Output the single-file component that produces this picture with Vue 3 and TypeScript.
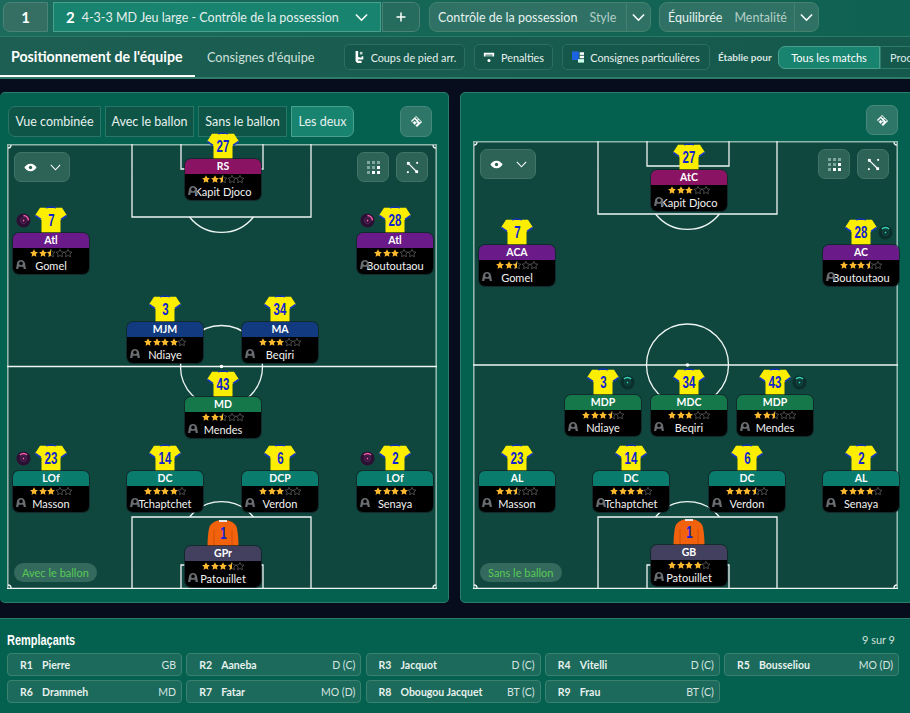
<script setup lang="ts">
interface Player {
  no: number
  pos: string
  name: string
  rating: number
  x: number
  y: number
  tone: string
  mark?: 'left' | 'right'
  gk?: boolean
}

interface Panel {
  id: string
  w: number
  h: number
  badge: string
  tabs: boolean
  players: Player[]
}

const panels: Panel[] = [
  {
    id: 'with',
    w: 430,
    h: 445,
    badge: 'Avec le ballon',
    tabs: true,
    players: [
      { no: 27, pos: 'RS', name: 'Kapit Djoco', rating: 2.5, x: 178, y: 15, tone: 'magenta' },
      { no: 7, pos: 'Atl', name: 'Gomel', rating: 2.5, x: 6, y: 89, tone: 'purple', mark: 'left' },
      { no: 28, pos: 'Atl', name: 'Boutoutaou', rating: 3, x: 350, y: 89, tone: 'purple', mark: 'left' },
      { no: 3, pos: 'MJM', name: 'Ndiaye', rating: 4, x: 120, y: 178, tone: 'navy' },
      { no: 34, pos: 'MA', name: 'Beqiri', rating: 3, x: 235, y: 178, tone: 'navy' },
      { no: 43, pos: 'MD', name: 'Mendes', rating: 2.5, x: 178, y: 253, tone: 'green' },
      { no: 23, pos: 'LOf', name: 'Masson', rating: 3, x: 6, y: 327, tone: 'teal', mark: 'left' },
      { no: 14, pos: 'DC', name: 'Tchaptchet', rating: 4, x: 120, y: 327, tone: 'teal' },
      { no: 6, pos: 'DCP', name: 'Verdon', rating: 3, x: 235, y: 327, tone: 'teal' },
      { no: 2, pos: 'LOf', name: 'Senaya', rating: 4, x: 350, y: 327, tone: 'teal', mark: 'left' },
      { no: 1, pos: 'GPr', name: 'Patouillet', rating: 3.5, x: 178, y: 402, tone: 'slate', gk: true }
    ]
  },
  {
    id: 'without',
    w: 425,
    h: 448,
    badge: 'Sans le ballon',
    tabs: false,
    players: [
      { no: 27, pos: 'AtC', name: 'Kapit Djoco', rating: 3, x: 178, y: 29, tone: 'magenta' },
      { no: 7, pos: 'ACA', name: 'Gomel', rating: 2.5, x: 6, y: 104, tone: 'purple' },
      { no: 28, pos: 'AC', name: 'Boutoutaou', rating: 3.5, x: 350, y: 104, tone: 'purple', mark: 'right' },
      { no: 3, pos: 'MDP', name: 'Ndiaye', rating: 3.5, x: 92, y: 254, tone: 'green', mark: 'right' },
      { no: 34, pos: 'MDC', name: 'Beqiri', rating: 3, x: 178, y: 254, tone: 'green' },
      { no: 43, pos: 'MDP', name: 'Mendes', rating: 2.5, x: 264, y: 254, tone: 'green', mark: 'right' },
      { no: 23, pos: 'AL', name: 'Masson', rating: 2.5, x: 6, y: 330, tone: 'teal' },
      { no: 14, pos: 'DC', name: 'Tchaptchet', rating: 4, x: 120, y: 330, tone: 'teal' },
      { no: 6, pos: 'DC', name: 'Verdon', rating: 3.5, x: 236, y: 330, tone: 'teal' },
      { no: 2, pos: 'AL', name: 'Senaya', rating: 4, x: 350, y: 330, tone: 'teal' },
      { no: 1, pos: 'GB', name: 'Patouillet', rating: 4, x: 178, y: 404, tone: 'slate', gk: true }
    ]
  }
]

const subs = [
  ['R1', 'Pierre', 'GB'],
  ['R2', 'Aaneba', 'D (C)'],
  ['R3', 'Jacquot', 'D (C)'],
  ['R4', 'Vitelli', 'D (C)'],
  ['R5', 'Bousseliou', 'MO (D)'],
  ['R6', 'Drammeh', 'MD'],
  ['R7', 'Fatar', 'MO (D)'],
  ['R8', 'Obougou Jacquet', 'BT (C)'],
  ['R9', 'Frau', 'BT (C)']
]

const views = ['Vue combinée', 'Avec le ballon', 'Sans le ballon', 'Les deux']

const starState = (rating: number, i: number) => {
  if (rating >= i) return 'full'
  if (rating >= i - 0.5) return 'half'
  return 'empty'
}

const STAR = '5,.4 6.5,3.5 9.9,4 7.4,6.3 8,9.7 5,8.1 2,9.7 2.6,6.3 .1,4 3.5,3.5'
const HALF = '5,.4 3.5,3.5 .1,4 2.6,6.3 2,9.7 5,8.1'
</script>

<template>
  <div class="screen">
    <header class="topbar">
      <button class="slot">1</button>
      <div class="tactic">
        <b>2</b>
        <span class="tactic-name">4-3-3 MD Jeu large - Contrôle de la possession</span>
        <svg class="chev" viewBox="0 0 14 9"><path d="M1 1.2 7 7.4 13 1.2" /></svg>
      </div>
      <button class="plus">
        <svg viewBox="0 0 10 10"><path d="M5 .5v9M.5 5h9" /></svg>
      </button>
      <div class="drop style-drop">
        <span class="value">Contrôle de la possession</span>
        <span class="caption">Style</span>
        <i class="drop-end"><svg class="chev" viewBox="0 0 14 9"><path d="M1 1.2 7 7.4 13 1.2" /></svg></i>
      </div>
      <div class="drop mind-drop">
        <span class="value">Équilibrée</span>
        <span class="caption">Mentalité</span>
        <i class="drop-end"><svg class="chev" viewBox="0 0 14 9"><path d="M1 1.2 7 7.4 13 1.2" /></svg></i>
      </div>
    </header>

    <nav class="tabsbar">
      <a class="tab active">Positionnement de l'équipe</a>
      <a class="tab second">Consignes d'équipe</a>
      <button class="tool setpiece">
        <svg viewBox="0 0 12 14"><path d="M2 0h3v7l4 1v-2h2v4H5v1.500h4V14H4L2 12z" fill="#fff" /><path d="M7 1h3v3H7z" fill="#fff" opacity=".75" /></svg>
        Coups de pied arr.
      </button>
      <button class="tool penalty">
        <svg viewBox="0 0 14 12"><path d="M1 1h12v4.500h-2V3H3v2.500H1z" fill="#fff" /><rect x="3" y="3" width="8" height="2.500" fill="#fff" opacity=".45" /><circle cx="7" cy="10" r="1.800" fill="#fff" /></svg>
        Penalties
      </button>
      <button class="tool special">
        <svg viewBox="0 0 14 13"><rect x="0" y="0" width="8" height="10" fill="#1c63e0" /><rect x="9" y="1" width="5" height="3" fill="#fff" /><rect x="9" y="5" width="5" height="3" fill="#fff" /><rect x="7" y="9" width="7" height="4" fill="#cfe" /></svg>
        Consignes particulières
      </button>
      <span class="for-label">Établie pour</span>
      <div class="segment">
        <span class="seg on">Tous les matchs</span>
        <span class="seg">Prochain match</span>
      </div>
    </nav>

    <main class="boards">
      <section v-for="panel in panels" :key="panel.id" class="panel" :class="panel.id">
        <div class="panel-tools">
          <template v-if="panel.tabs">
            <button v-for="v in views" :key="v" class="view" :class="{ on: v === 'Les deux' }">{{ v }}</button>
          </template>
          <button class="square flip">
            <svg viewBox="0 0 14 14"><path d="M6.500 1 13 7.500 7.500 13 1 6.500z" fill="#fff" /><path d="M2.500 8 5 5.500 6.800 7.300M5.500 10.800 8 8.300M6 2.500 8.200 4.700M9 5.500l2.200 2.200" stroke="#2e7668" stroke-width="1.200" fill="none" /></svg>
          </button>
        </div>

        <div class="pitch" :style="{ width: panel.w + 'px', height: panel.h + 'px' }">
          <svg class="lines" :width="panel.w" :height="panel.h" :viewBox="`0 0 ${panel.w} ${panel.h}`" fill="none">
            <path :d="`M.8 ${panel.h}V.8H${panel.w - 0.8}V${panel.h}`" stroke="#8fb5ac" stroke-width="1.600" />
            <g stroke="#eef5f3" stroke-width="1.300">
              <path d="M125 0V73H304V0M174 0V25H256V0" />
              <path d="M182.500 73A41 41 0 0 0 246.500 73" />
              <path :d="`M0 ${panel.h / 2}H${panel.w}`" />
              <circle cx="214.500" :cy="panel.h / 2" r="41" />
              <path :d="`M125 ${panel.h}V${panel.h - 72}H304V${panel.h}M174 ${panel.h}V${panel.h - 24}H256V${panel.h}`" />
              <path :d="`M182.500 ${panel.h - 72}A41 41 0 0 1 246.500 ${panel.h - 72}`" />
              <path :d="`M0 ${panel.h - 0.6}H${panel.w}`" />
              <path :d="`M1 4A3 3 0 0 0 4 1M${panel.w - 4} 1A3 3 0 0 0 ${panel.w - 1} 4M1 ${panel.h - 4}A3 3 0 0 1 4 ${panel.h - 1}M${panel.w - 4} ${panel.h - 1}A3 3 0 0 1 ${panel.w - 1} ${panel.h - 4}`" />
            </g>
            <circle cx="214.500" :cy="panel.h / 2" r="1.800" fill="#fff" />
          </svg>

          <button class="eye-btn">
            <svg class="eye" viewBox="0 0 14 9"><path d="M7 .5C3.800.5 1.500 2.600.5 4.500 1.500 6.400 3.800 8.500 7 8.500s5.500-2.100 6.500-4C12.500 2.600 10.200.5 7 .5z" fill="#fff" /><circle cx="7" cy="4.500" r="1.800" fill="#2d6357" /></svg>
            <svg class="chev small" viewBox="0 0 14 9"><path d="M1 1.200 7 7.400 13 1.200" /></svg>
          </button>
          <div class="pitch-tools">
            <button class="square">
              <svg viewBox="0 0 13 13"><g fill="#7fa79d"><rect x="0" y="0" width="3" height="3" /><rect x="5" y="0" width="3" height="3" /><rect x="10" y="0" width="3" height="3" /><rect x="0" y="5" width="3" height="3" /><rect x="5" y="5" width="3" height="3" /><rect x="0" y="10" width="3" height="3" /></g><g fill="#fff"><rect x="10" y="5" width="3" height="3" /><rect x="5" y="10" width="3" height="3" /><rect x="10" y="10" width="3" height="3" /></g></svg>
            </button>
            <button class="square">
              <svg viewBox="0 0 14 14"><path d="M2.500 2.500 11 11" stroke="#fff" stroke-width="1.300" /><g fill="#fff"><rect x="1" y="1" width="3" height="3" /><rect x="10" y="10" width="3" height="3" /><rect x="11" y="1" width="2" height="2" /><rect x="1" y="11" width="2" height="2" /></g></svg>
            </button>
          </div>
          <span class="phase">{{ panel.badge }}</span>

          <div
            v-for="p in panel.players"
            :key="p.pos + p.no"
            class="player"
            :style="{ left: p.x + 'px', top: p.y - 26 + 'px' }"
          >
            <div class="shirt">
              <svg v-if="p.gk" viewBox="0 0 32 27">
                <path d="M11 .5h10c5 1.500 8 3.500 9 8 1 5 1.500 12 1.500 18.500H.5C.5 20.500 1 13.500 2 8.500 3 4 6 2 11 .5z" fill="#f2610c" />
                <path d="M12 0h8v2h-8z" fill="#e6e6e6" />
                <path d="M7 10v17M25 10v17" stroke="#c94d05" stroke-width=".8" />
              </svg>
              <svg v-else viewBox="0 0 32 27">
                <path d="M5 .8H27L32 8.500 25.500 13V27H6.500V13L0 8.500z" fill="#fbee00" />
                <path d="M11 1C13 -.2 19 -.2 21 1" stroke="#1437c4" stroke-width="1.300" />
                <path d="M.3 8.500 6 12.300M31.700 8.500 26 12.300" stroke="#1437c4" stroke-width="1.600" />
              </svg>
              <span class="number"><span>{{ p.no }}</span></span>
            </div>
            <span v-if="p.mark" class="mood" :class="[p.mark, { turned: p.pos === 'Atl' }]">
              <svg viewBox="0 0 16 16">
                <circle cx="8" cy="8" r="7.500" />
                <circle class="ring" cx="8" cy="8" r="3.200" />
                <circle class="core" cx="8" cy="8" r="1" />
                <path class="arc" d="M4.200 4.300A5.300 5.300 0 0 1 11.800 4.300" />
              </svg>
            </span>
            <div class="card">
              <div class="role" :class="p.tone">{{ p.pos }}</div>
              <div class="info">
                <div class="stars">
                  <svg v-for="i in 5" :key="i" viewBox="0 0 10 10">
                    <polygon v-if="starState(p.rating, i) === 'full'" :points="STAR" fill="#fdb92e" />
                    <template v-else>
                      <polygon :points="STAR" fill="none" stroke="#6e6e6e" stroke-width=".8" />
                      <polygon v-if="starState(p.rating, i) === 'half'" :points="HALF" fill="#fdb92e" />
                    </template>
                  </svg>
                </div>
                <div class="who">
                  <svg class="avatar" viewBox="0 0 11 10"><path d="M5.500 0C3 0 1.500 1.600 1 4L0 10h2.500L3 7.500h5L8.500 10H11L10 4C9.500 1.600 8 0 5.500 0z" fill="#6a6e72" /><circle cx="5.500" cy="3.800" r="2" fill="#000" /></svg>
                  <span class="name">{{ p.name }}</span>
                </div>
              </div>
            </div>
          </div>
        </div>
      </section>
    </main>

    <footer class="subs">
      <div class="subs-head">
        <h2>Remplaçants</h2>
        <span>9 sur 9</span>
      </div>
      <div class="subs-grid">
        <div v-for="s in subs" :key="s[0]" class="sub">
          <span class="sub-no">{{ s[0] }}</span>
          <span class="sub-name">{{ s[1] }}</span>
          <span class="sub-pos">{{ s[2] }}</span>
        </div>
      </div>
    </footer>
  </div>
</template>

<style scoped>
.screen {
  width: 910px;
  height: 713px;
  overflow: hidden;
  display: flex;
  flex-direction: column;
  background: #070d1d;
  color: #fff;
  font-family: Lato, "Open Sans", sans-serif;
}

button {
  font: inherit;
  color: inherit;
  padding: 0;
  background: none;
  border: 0;
}

svg {
  display: block;
  overflow: visible;
}

.chev {
  width: 13px;
  height: 9px;
  fill: none;
  stroke: #fff;
  stroke-width: 1.7;
}

.chev.small {
  width: 11px;
  height: 7px;
  stroke-width: 1.4;
}

/* top row */
.topbar {
  height: 37px;
  flex: none;
  display: flex;
  align-items: flex-start;
  padding: 2px 0 0 3px;
  box-sizing: border-box;
  background: linear-gradient(90deg, #1c6b5c, #0f6151);
  border-bottom: 1px solid #2b7a69;
}

.slot {
  width: 45px;
  height: 30px;
  border: 1px solid #4b8477;
  border-radius: 7px 0 0 7px;
  background: #356f64;
  font-size: 15px;
  font-weight: 700;
  margin-right: 5px;
}

.tactic {
  width: 328px;
  height: 30px;
  box-sizing: border-box;
  display: flex;
  align-items: center;
  background: #18836f;
  border: 1px solid #4aa08d;
  padding: 0 12px;
  font-size: 12.5px;
  margin-right: 1px;
}

.tactic b {
  font-size: 15px;
  margin-right: 7px;
}

.tactic-name {
  flex: 1;
  color: #e6f1ee;
  white-space: nowrap;
}

.plus {
  width: 38px;
  height: 30px;
  display: flex;
  align-items: center;
  justify-content: center;
  box-sizing: border-box;
  border: 1px solid #4b8477;
  border-radius: 0 7px 7px 0;
  background: #256c5e;
  margin-right: 9px;
}

.plus svg {
  width: 10px;
  height: 10px;
  stroke: #fff;
  stroke-width: 1.5;
}

.drop {
  height: 30px;
  box-sizing: border-box;
  display: flex;
  align-items: center;
  background: #2f7265;
  border: 1px solid #44826f;
  border-radius: 8px;
  padding-left: 8px;
  font-size: 12.5px;
  overflow: hidden;
}

.style-drop {
  width: 222px;
  margin-right: 8px;
}

.mind-drop {
  width: 160px;
}

.value {
  color: #e6f1ee;
  white-space: nowrap;
}

.caption {
  color: #b3cec7;
  margin-left: 12px;
  flex: 1;
}

.drop-end {
  width: 23px;
  height: 100%;
  display: flex;
  align-items: center;
  justify-content: center;
  border-left: 1px solid #44826f;
}

/* second row */
.tabsbar {
  height: 42px;
  flex: none;
  display: flex;
  align-items: center;
  box-sizing: border-box;
  background: linear-gradient(90deg, #1d5f53, #14594c);
  border-bottom: 2px solid #2f7b69;
  white-space: nowrap;
}

.tab {
  height: 100%;
  flex: none;
  display: flex;
  align-items: center;
  box-sizing: border-box;
  color: #cfe0db;
  font-size: 12.7px;
}

.tab.active {
  width: 195px;
  padding-left: 11px;
  color: #fff;
  font-weight: 700;
  font-size: 14.2px;
  border-bottom: 2px solid #fff;
}

.tab.second {
  width: 128px;
  padding-left: 12px;
}

.tool {
  height: 26px;
  flex: none;
  box-sizing: border-box;
  display: flex;
  align-items: center;
  justify-content: center;
  gap: 6px;
  font-size: 10.8px;
  color: #e6f1ee;
  background: #15574a;
  border: 1px solid #2a6f60;
  border-radius: 5px;
}

.tool svg {
  width: 12px;
  height: 12px;
}

.setpiece {
  width: 121px;
  margin: 0 9px 0 21px;
}

.penalty {
  width: 79px;
  margin-right: 9px;
}

.special {
  width: 148px;
}

.for-label {
  flex: none;
  width: 56px;
  margin: 0 4px 0 8px;
  font-size: 10px;
  font-weight: 700;
  color: #d6e5e1;
}

.segment {
  display: flex;
  flex: none;
  height: 23px;
}

.seg {
  display: flex;
  align-items: center;
  padding: 0 9px;
  font-size: 11px;
  border: 1px solid #2f7b69;
  color: #dcebe7;
}

.seg.on {
  width: 102px;
  box-sizing: border-box;
  justify-content: center;
  background: #18836f;
  border-color: #4aa08d;
  border-radius: 7px 0 0 7px;
  color: #fff;
}

/* boards */
.boards {
  flex: 1;
  display: flex;
  gap: 11px;
  padding: 13px 0 15px;
  min-height: 0;
}

.panel {
  flex: none;
  box-sizing: border-box;
  background: #05614f;
  border: 1px solid #2a7d6a;
  border-radius: 5px;
  display: flex;
  flex-direction: column;
}

.panel.with {
  width: 449px;
  padding: 13px 11px 0 7px;
  border-left: 0;
  gap: 7px;
}

.panel.without {
  width: 460px;
  padding: 12px 21px 0 12px;
  gap: 6px;
}

.panel-tools {
  height: 31px;
  display: flex;
  gap: 4px;
  justify-content: flex-end;
}

.without .panel-tools {
  height: 30px;
}

.with .panel-tools {
  margin-left: 1px;
}

.view {
  height: 31px;
  flex: none;
  box-sizing: border-box;
  padding: 0;
  font-size: 12.5px;
  background: #0f5547;
  border: 1px solid #2a7565;
  color: #e6f1ee;
  white-space: nowrap;
}

.view:first-child {
  border-radius: 7px 0 0 7px;
  width: 93px;
}

.view:nth-child(2),
.view:nth-child(3) {
  width: 89px;
}

.view.on {
  width: 63px;
  background: #18836f;
  border-color: #4aa08d;
  border-radius: 0 7px 7px 0;
  margin-right: 42px;
}

.with .flip {
  margin-right: 5px;
}

.square {
  width: 32px;
  height: 31px;
  flex: none;
  box-sizing: border-box;
  display: flex;
  align-items: center;
  justify-content: center;
  background: #2e7668;
  border: 1px solid #46897a;
  border-radius: 7px;
}

.without .flip {
  height: 30px;
}

.square svg {
  width: 13px;
  height: 13px;
}

.pitch {
  position: relative;
  background: #0f473e;
}

.lines {
  position: absolute;
  inset: 0;
}

.eye-btn {
  position: absolute;
  left: 7px;
  top: 8px;
  width: 56px;
  height: 30px;
  display: flex;
  align-items: center;
  justify-content: center;
  gap: 13px;
  background: #2d6357;
  border: 1px solid #3f7466;
  border-radius: 7px;
  box-sizing: border-box;
}

.eye {
  width: 13px;
  height: 9px;
}

.pitch-tools {
  position: absolute;
  right: 9px;
  top: 8px;
  display: flex;
  gap: 7px;
}

.pitch-tools .square {
  height: 30px;
  background: #2d6357;
  border-color: #3f7466;
}

.phase {
  position: absolute;
  left: 7px;
  bottom: 7px;
  height: 19px;
  line-height: 19px;
  padding: 0 8px;
  border-radius: 10px;
  background: #34695d;
  color: #58c956;
  font-size: 11px;
}

.player {
  position: absolute;
  width: 76px;
  display: flex;
  flex-direction: column;
  align-items: center;
}

.shirt {
  position: relative;
  width: 32px;
  height: 27px;
  margin-bottom: -1px;
}

.number {
  position: absolute;
  left: 0;
  right: 0;
  top: 5px;
  text-align: center;
  font-family: "Liberation Sans", sans-serif;
  font-weight: 700;
  font-size: 16px;
  line-height: 18px;
  color: #1024cf;
}

.number span {
  display: inline-block;
  transform: scaleX(0.72);
}

.mood {
  position: absolute;
  top: 6px;
  width: 15px;
  height: 15px;
}

.mood.left {
  left: 3px;
}

.mood.right {
  left: 55px;
}

.mood.turned svg {
  transform: rotate(45deg);
}

.mood .arc {
  fill: none;
  stroke-width: 1.5;
}

.mood .ring {
  fill: none;
  stroke-width: 1;
}

.mood.left circle {
  fill: #2c1033;
}

.mood.left .ring {
  fill: none;
  stroke: #5b2a63;
}

.mood.left .core {
  fill: #f061a8;
}

.mood.left .arc {
  stroke: #f061a8;
}

.mood.right circle {
  fill: #0a2f2d;
}

.mood.right .ring {
  fill: none;
  stroke: #14544c;
}

.mood.right .core {
  fill: #2fd0b0;
}

.mood.right .arc {
  stroke: #35d8b8;
}

.card {
  width: 76px;
  box-sizing: border-box;
  border-radius: 6px;
  overflow: hidden;
  position: relative;
  box-shadow: 0 0 0 1px rgba(20, 30, 35, 0.7);
}

.role {
  height: 15px;
  line-height: 15px;
  text-align: center;
  font-size: 10.5px;
  font-weight: 700;
  color: #fff;
}

.role.magenta { background: #8a1364; }
.role.purple { background: #6b1a8a; }
.role.navy { background: #113a80; }
.role.green { background: #14784b; }
.role.teal { background: #0a7c6d; }
.role.slate { background: #43405f; }

.info {
  height: 26px;
  background: #000;
  padding-top: 1px;
  box-sizing: border-box;
}

.stars {
  display: flex;
  justify-content: center;
  gap: 0.5px;
  height: 9px;
}

.stars svg {
  width: 8px;
  height: 8px;
}

.who {
  position: relative;
  height: 15px;
  display: flex;
  align-items: center;
  justify-content: center;
}

.avatar {
  position: absolute;
  left: 3px;
  top: 2px;
  width: 10px;
  height: 9px;
}

.name {
  font-size: 11px;
  color: #f2f2f2;
  white-space: nowrap;
}

/* substitutes */
.subs {
  flex: none;
  height: 95px;
  box-sizing: border-box;
  background: #05614f;
  border-top: 1px solid #2a7d6a;
  padding: 11px 11px 0 7px;
}

.subs-head {
  display: flex;
  justify-content: space-between;
  align-items: center;
  height: 18px;
  margin-bottom: 5px;
  padding-right: 4px;
}

.subs-head h2 {
  margin: 0;
  font-family: "Liberation Sans", sans-serif;
  font-size: 15px;
  font-weight: 700;
  transform: scaleX(0.73);
  transform-origin: left center;
}

.subs-head span {
  font-size: 11px;
  color: #cfe0db;
}

.subs-grid {
  display: grid;
  grid-template-columns: repeat(5, 175px);
  gap: 4px 4.25px;
}

.sub {
  height: 23px;
  box-sizing: border-box;
  display: flex;
  align-items: center;
  padding: 0 5px 0 12px;
  background: #1c6a5b;
  border: 1px solid #3a8170;
  border-radius: 4px;
  font-size: 10.5px;
  font-weight: 700;
  color: #e6f1ee;
}

.sub-no {
  width: 22px;
}

.sub-name {
  flex: 1;
}

.sub-pos {
  font-weight: 400;
  color: #d5e4e0;
}
</style>

<style>
body {
  background: #070d1d;
}
</style>
